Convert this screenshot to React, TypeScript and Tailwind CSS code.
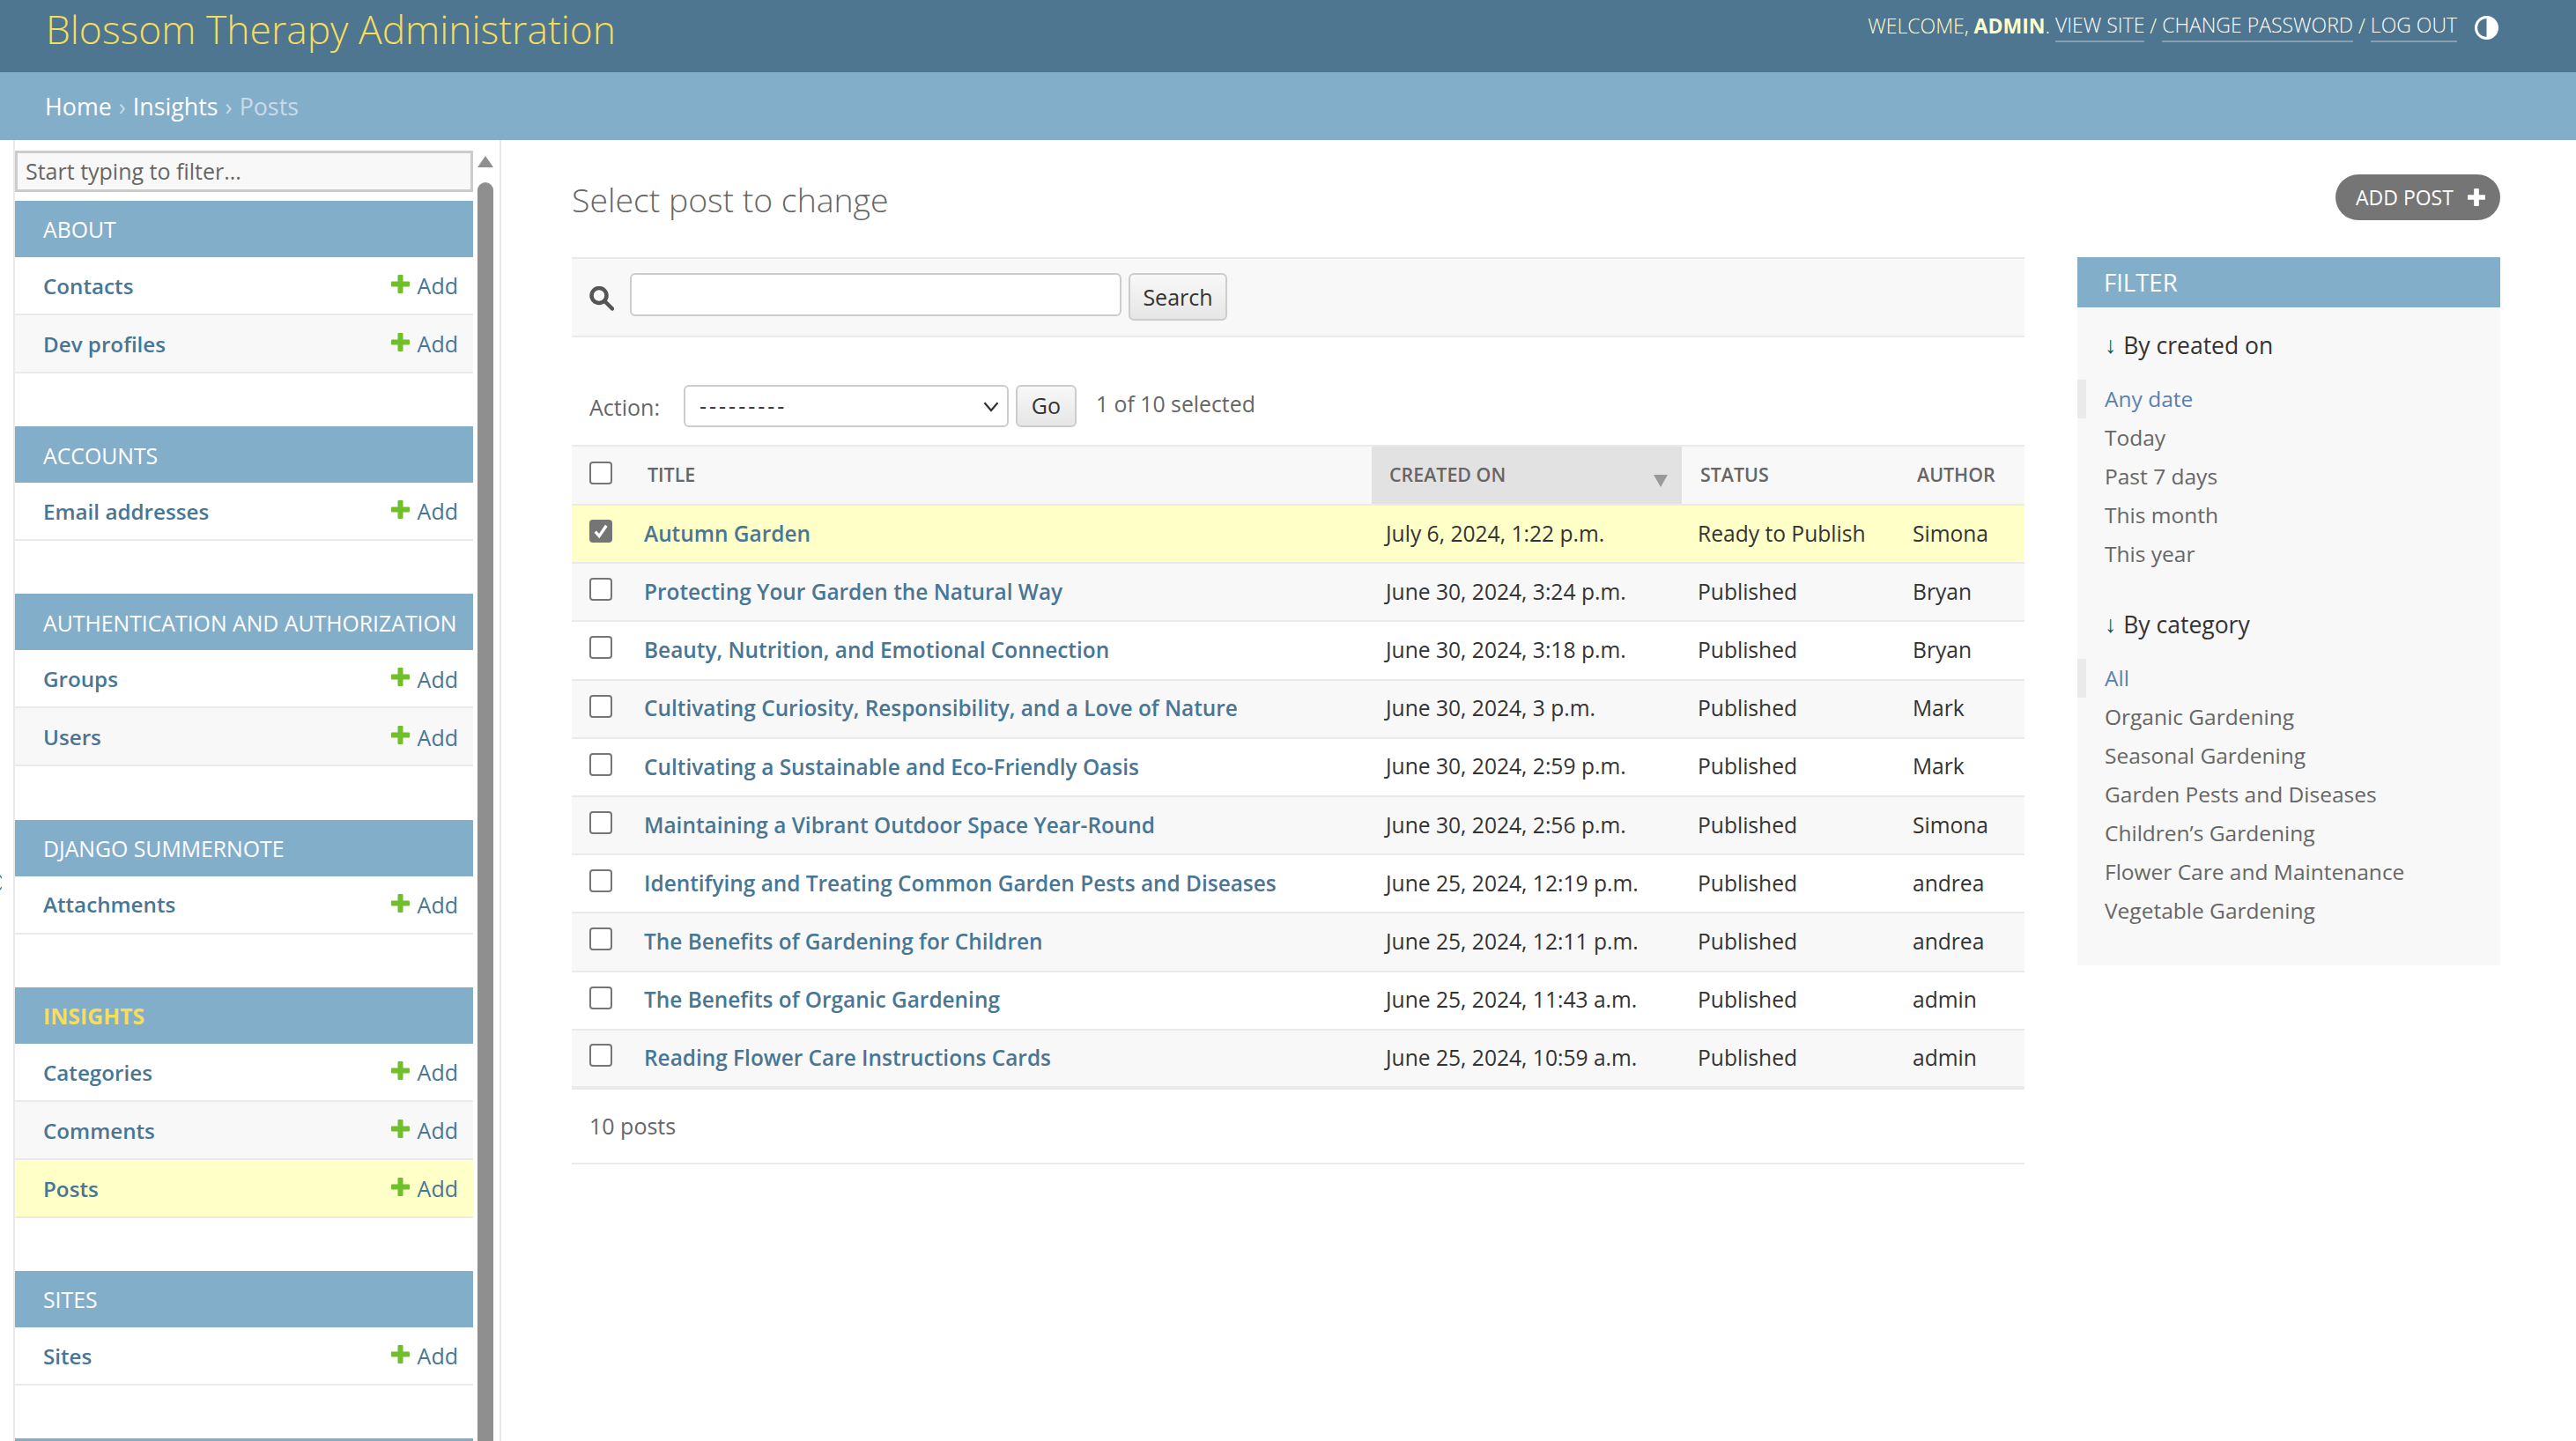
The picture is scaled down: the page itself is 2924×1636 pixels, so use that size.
import { Fragment } from "react";

const sections = [
  { name: "About", rows: ["Contacts", "Dev profiles"] },
  { name: "Accounts", rows: ["Email addresses"] },
  { name: "Authentication and Authorization", rows: ["Groups", "Users"] },
  { name: "Django Summernote", rows: ["Attachments"] },
  { name: "Insights", rows: ["Categories", "Comments", "Posts"], active: true },
  { name: "Sites", rows: ["Sites"] },
  // the next section is cut off by the bottom of the window
  { name: "", rows: [] },
];

const posts = [
  ["Autumn Garden", "July 6, 2024, 1:22 p.m.", "Ready to Publish", "Simona"],
  ["Protecting Your Garden the Natural Way", "June 30, 2024, 3:24 p.m.", "Published", "Bryan"],
  ["Beauty, Nutrition, and Emotional Connection", "June 30, 2024, 3:18 p.m.", "Published", "Bryan"],
  ["Cultivating Curiosity, Responsibility, and a Love of Nature", "June 30, 2024, 3 p.m.", "Published", "Mark"],
  ["Cultivating a Sustainable and Eco-Friendly Oasis", "June 30, 2024, 2:59 p.m.", "Published", "Mark"],
  ["Maintaining a Vibrant Outdoor Space Year-Round", "June 30, 2024, 2:56 p.m.", "Published", "Simona"],
  ["Identifying and Treating Common Garden Pests and Diseases", "June 25, 2024, 12:19 p.m.", "Published", "andrea"],
  ["The Benefits of Gardening for Children", "June 25, 2024, 12:11 p.m.", "Published", "andrea"],
  ["The Benefits of Organic Gardening", "June 25, 2024, 11:43 a.m.", "Published", "admin"],
  ["Reading Flower Care Instructions Cards", "June 25, 2024, 10:59 a.m.", "Published", "admin"],
];

const filters = [
  { title: "By created on", options: ["Any date", "Today", "Past 7 days", "This month", "This year"] },
  {
    title: "By category",
    options: [
      "All",
      "Organic Gardening",
      "Seasonal Gardening",
      "Garden Pests and Diseases",
      "Children’s Gardening",
      "Flower Care and Maintenance",
      "Vegetable Gardening",
    ],
  },
];

function Plus({ className }: { className: string }) {
  return (
    <svg viewBox="0 0 21 21" className={className} fill="currentColor">
      <path d="M7.5 1q0-1 1-1h4q1 0 1 1v6.5H20q1 0 1 1v4q0 1-1 1h-6.5V20q0 1-1 1h-4q-1 0-1-1v-6.5H1q-1 0-1-1v-4q0-1 1-1h6.5z" />
    </svg>
  );
}

function Checkbox({ checked }: { checked?: boolean }) {
  return (
    <span
      className={`flex h-[26px] w-[26px] items-center justify-center rounded-[4px] border-2 ${
        checked ? "border-[#757575] bg-[#757575]" : "border-[#767676] bg-white"
      }`}
    >
      {checked && (
        <svg viewBox="0 0 16 16" className="h-[20px] w-[20px]" fill="none" stroke="#fff" strokeWidth="2.6">
          <path d="M3 8.5 6.5 12.5 13 3" />
        </svg>
      )}
    </span>
  );
}

function Sidebar() {
  return (
    <aside className="relative flex h-full w-[569px] shrink-0 border-r-2 border-[#eaeaea] pl-[15px]">
      {/* toggle button of the nav sidebar, almost fully off-screen */}
      <svg viewBox="0 0 2 18" className="absolute left-0 top-[834px] h-[18px] w-[2px]" fill="none" stroke="#447e9b" strokeWidth="1.5">
        <path d="M0 1 2 4M0 17 2 14" />
      </svg>
      <div className="h-full w-[522px] border-l-2 border-[#eaeaea]">
        <div className="pt-[12px] pb-[10px]">
          <div className="flex h-[47px] w-[520px] items-center border-[3px] border-[#cccccc] bg-[#f8f8f8] px-[9px] text-[25px] text-[#666666]">
            Start typing to filter...
          </div>
        </div>
        {sections.map((s) => (
          <div key={s.name} className="mb-[60.2px] w-[520px]">
            <div
              className={`flex h-[64px] items-center bg-[#83aeca] pl-[32px] pt-[2px] text-[24.8px] uppercase ${
                s.active ? "font-bold text-[#f5dd5d]" : "text-white"
              }`}
            >
              {s.name}
            </div>
            {s.rows.map((row, i) => (
              <div
                key={row}
                className={`flex h-[66px] items-center justify-between border-b-2 border-[#eaeaea] pl-[32px] pr-[17px] pt-[2px] text-[24.2px] text-[#487694] ${
                  row === "Posts" ? "bg-[#ffffc8]" : i % 2 ? "bg-[#f8f8f8]" : "bg-white"
                }`}
              >
                <span className="font-semibold">{row}</span>
                <span className="flex items-center gap-[9px] text-[25px]">
                  <Plus className="mb-[5px] h-[21px] w-[21px] text-[#70bf2b]" />
                  Add
                </span>
              </div>
            ))}
          </div>
        ))}
      </div>
      <div className="relative ml-[5px] w-[18px]">
        <span className="absolute left-0 top-[18px] h-0 w-0 border-x-[9px] border-b-[13px] border-x-transparent border-b-[#8f8f8f]" />
        <div className="mt-[48px] h-[2000px] rounded-t-[9px] bg-[#8f8f8f]" />
      </div>
    </aside>
  );
}

function ChangeList() {
  return (
    <div className="w-[1649px]">
      <div className="flex h-[91px] items-start border-y-2 border-[#eaeaea] bg-[#f8f8f8] pl-[20px] pt-[16px]">
        <svg viewBox="0 0 28 28" className="mt-[15px] h-[28px] w-[28px] text-[#555555]" fill="none" stroke="currentColor">
          <circle cx="11" cy="10.5" r="8.5" strokeWidth="4.5" />
          <path d="m17 16.5 9 9" strokeWidth="4.5" strokeLinecap="round" />
        </svg>
        <div className="ml-[18px] h-[49px] w-[558px] rounded-[6px] border-2 border-[#cccccc] bg-white" />
        <button className="ml-[8px] flex h-[54px] w-[112px] items-center justify-center rounded-[6px] border-2 border-[#cccccc] bg-gradient-to-b from-[#f8f8f8] to-[#e6e6e6] pt-[2px] text-[25px] text-[#333333]">
          Search
        </button>
      </div>
      <div className="flex h-[122px] items-start pl-[20px] pt-[54px] text-[25px] text-[#666666]">
        <span className="mt-[7px]">Action:</span>
        <div className="ml-[27px] flex h-[48px] w-[369px] items-center justify-between rounded-[6px] border-2 border-[#cccccc] bg-white pl-[16px] pr-[8px] font-medium tracking-[3px] text-[#333333]">
          ---------
          <svg viewBox="0 0 16 16" className="h-[20px] w-[20px]" fill="none" stroke="#333" strokeWidth="1.8">
            <path d="m2 5 6 7 6-7" />
          </svg>
        </div>
        <button className="ml-[8px] flex h-[48px] w-[69px] items-center justify-center rounded-[6px] border-2 border-[#cccccc] bg-gradient-to-b from-[#f8f8f8] to-[#e6e6e6] text-[#333333]">
          Go
        </button>
        <span className="ml-[22px] mt-[3px] text-[24.8px]">1 of 10 selected</span>
      </div>
      <table className="w-full table-fixed border-collapse text-[24.6px] text-[#333333]">
        <colgroup>
          <col className="w-[64px]" />
          <col className="w-[844px]" />
          <col className="w-[352px]" />
          <col className="w-[247px]" />
          <col className="w-[142px]" />
        </colgroup>
        <thead>
          <tr className="h-[67px] border-y-2 border-[#eaeaea] bg-[#f8f8f8] text-left text-[21.4px] uppercase text-[#666666]">
            <th className="pl-[20px] pb-[6px]">
              <Checkbox />
            </th>
            <th className="pl-[22px] font-semibold">Title</th>
            <th className="relative bg-[#e2e2e2] pl-[20px] font-semibold">
              Created on
              <span className="absolute right-[16px] top-[32px] h-0 w-0 border-x-[8px] border-t-[14px] border-x-transparent border-t-[#999999]" />
            </th>
            <th className="pl-[21px] font-semibold">Status</th>
            <th className="pl-[20px] font-semibold">Author</th>
          </tr>
        </thead>
        <tbody>
          {posts.map((post, i) => (
            <tr
              key={post[0]}
              className={`h-[66.2px] border-[#eaeaea] ${i === 9 ? "border-b-4" : "border-b-2"} ${
                i === 0 ? "bg-[#ffffc8]" : i % 2 ? "bg-[#f8f8f8]" : "bg-white"
              }`}
            >
              <td className="pl-[20px] pb-[6px]">
                <Checkbox checked={i === 0} />
              </td>
              <td className="pl-[18px] text-[24.4px] font-semibold text-[#487694]">{post[0]}</td>
              <td className="pl-[16px]">{post[1]}</td>
              <td className="pl-[18px]">{post[2]}</td>
              <td className="pl-[15px]">{post[3]}</td>
            </tr>
          ))}
        </tbody>
      </table>
      <div className="flex h-[85px] items-center border-b-2 border-[#eaeaea] pl-[20px] text-[25px] text-[#666666]">10 posts</div>
    </div>
  );
}

function FilterPanel() {
  return (
    <div className="w-[480px]">
      <div className="flex h-[57px] items-center bg-[#83aeca] pl-[30px] text-[27.5px] uppercase text-white">Filter</div>
      <div className="h-[747px] bg-[#f8f8f8] pt-[24px]">
        {filters.map((f) => (
          <Fragment key={f.title}>
            <div className="mb-[18px] flex h-[40px] items-center pl-[31px] text-[26.5px] text-[#333333]">
              <span className="mr-[8px] font-['Liberation_Sans',sans-serif] text-[#1d4f6f]">↓</span>
              {f.title}
            </div>
            <ul className="mb-[39px]">
              {f.options.map((o, i) => (
                <li
                  key={o}
                  className={`flex h-[44px] items-center text-[24.5px] ${
                    i === 0 ? "border-l-[10px] border-[#eaeaea] pl-[21px] text-[#5b80b2]" : "pl-[31px] text-[#666666]"
                  }`}
                >
                  {o}
                </li>
              ))}
            </ul>
          </Fragment>
        ))}
      </div>
    </div>
  );
}

export default function App() {
  return (
    <div className="flex h-[1636px] flex-col overflow-hidden bg-white font-['Open_Sans',sans-serif]">
      <header className="flex h-[82px] shrink-0 items-start justify-between bg-[#4f7690] pl-[52px] pr-[88px]">
        <h1 className="text-[44.4px] font-light text-[#f5dd5d]">Blossom Therapy Administration</h1>
        <div className="mt-[11px] flex items-center text-[23px] font-light uppercase text-[#ffffcc]">
          Welcome,&nbsp;<strong className="font-bold">Admin</strong>.&nbsp;
          <a className="border-b-2 border-white/30 text-white">View site</a>&nbsp;/&nbsp;
          <a className="border-b-2 border-white/30 text-white">Change password</a>&nbsp;/&nbsp;
          <a className="border-b-2 border-white/30 text-white">Log out</a>
          <svg viewBox="0 0 27 27" className="ml-[20px] mt-[4px] h-[27px] w-[27px]">
            <circle cx="13.5" cy="13.5" r="12" fill="none" stroke="#fff" strokeWidth="3" />
            <path d="M13.5 1.5a12 12 0 0 1 0 24z" fill="#fff" />
          </svg>
        </div>
      </header>
      <nav className="flex h-[77px] shrink-0 items-center bg-[#83aeca] pl-[51px] pt-[2px] text-[26.8px] text-white">
        Home<span className="mx-[8px] text-[#c9dbe7]">›</span>Insights<span className="mx-[8px] text-[#c9dbe7]">›</span>
        <span className="text-[#c9dbe7]">Posts</span>
      </nav>
      <div className="flex min-h-0 flex-1">
        <Sidebar />
        <main className="min-w-0 flex-1 pl-[80px] pr-[86px]">
          <div className="flex h-[133px] items-start justify-between">
            <h2 className="mt-[40px] text-[37.4px] font-light text-[#666666]">Select post to change</h2>
            <a className="mt-[39px] flex h-[52px] w-[187px] items-center gap-[16px] rounded-[26px] bg-[#757575] pl-[23px] text-[23px] uppercase text-white">
              Add post
              <Plus className="h-[20px] w-[20px]" />
            </a>
          </div>
          <div className="flex gap-[60px]">
            <ChangeList />
            <FilterPanel />
          </div>
        </main>
      </div>
    </div>
  );
}
